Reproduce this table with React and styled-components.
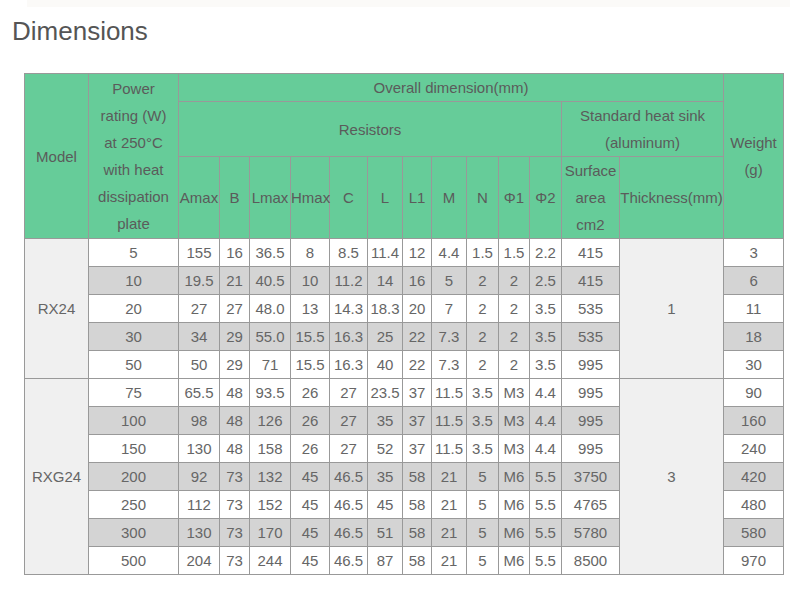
import React from "react";
import styled, { createGlobalStyle } from "styled-components";

const Global = createGlobalStyle`
  html, body { margin: 0; padding: 0; background: #fff; }
  body { font-family: "Liberation Sans", Arial, sans-serif; }
`;

const Page = styled.div`
  width: 800px;
  height: 600px;
  position: relative;
  overflow: hidden;
`;

const TopStrip = styled.div`
  margin-left: 27px;
  width: 763px;
  height: 7px;
  background: #fbfaf8;
`;

const Title = styled.h2`
  margin: 9px 0 0 12px;
  font-size: 26px;
  line-height: 30px;
  font-weight: normal;
  color: #555;
`;

const Table = styled.table`
  margin: 27px 0 0 24px;
  width: 759px;
  border-collapse: collapse;
  table-layout: fixed;
  font-size: 15px;
  color: #666;
`;

const Th = styled.th`
  background: #66cc99;
  border: 1px solid #999;
  font-weight: normal;
  color: #5b5b5b;
  line-height: 27px;
  padding: 0;
  text-align: center;
  vertical-align: middle;
  white-space: ${(p) => (p.$nowrap ? "nowrap" : "normal")};
`;

const Td = styled.td`
  background: ${(p) => (p.$shade ? "#f0f0f0" : p.$gray ? "#d4d4d4" : "#fff")};
  border: 1px solid #999;
  line-height: 27px;
  padding: 0;
  text-align: center;
  vertical-align: middle;
  white-space: nowrap;
`;

const widths = [64, 90, 41, 30, 41, 39, 38, 35, 29, 35, 32, 31, 32, 58, 104, 60];

const groups = [
  {
    model: "RX24",
    thick: "1",
    rows: [
      ["5", "155", "16", "36.5", "8", "8.5", "11.4", "12", "4.4", "1.5", "1.5", "2.2", "415", "3"],
      ["10", "19.5", "21", "40.5", "10", "11.2", "14", "16", "5", "2", "2", "2.5", "415", "6"],
      ["20", "27", "27", "48.0", "13", "14.3", "18.3", "20", "7", "2", "2", "3.5", "535", "11"],
      ["30", "34", "29", "55.0", "15.5", "16.3", "25", "22", "7.3", "2", "2", "3.5", "535", "18"],
      ["50", "50", "29", "71", "15.5", "16.3", "40", "22", "7.3", "2", "2", "3.5", "995", "30"],
    ],
    gray: [false, true, false, true, false],
  },
  {
    model: "RXG24",
    thick: "3",
    rows: [
      ["75", "65.5", "48", "93.5", "26", "27", "23.5", "37", "11.5", "3.5", "M3", "4.4", "995", "90"],
      ["100", "98", "48", "126", "26", "27", "35", "37", "11.5", "3.5", "M3", "4.4", "995", "160"],
      ["150", "130", "48", "158", "26", "27", "52", "37", "11.5", "3.5", "M3", "4.4", "995", "240"],
      ["200", "92", "73", "132", "45", "46.5", "35", "58", "21", "5", "M6", "5.5", "3750", "420"],
      ["250", "112", "73", "152", "45", "46.5", "45", "58", "21", "5", "M6", "5.5", "4765", "480"],
      ["300", "130", "73", "170", "45", "46.5", "51", "58", "21", "5", "M6", "5.5", "5780", "580"],
      ["500", "204", "73", "244", "45", "46.5", "87", "58", "21", "5", "M6", "5.5", "8500", "970"],
    ],
    gray: [false, true, false, true, false, true, false],
  },
];

const subHeads = ["Amax", "B", "Lmax", "Hmax", "C", "L", "L1", "M", "N", "Φ1", "Φ2"];

export default function App() {
  return (
    <Page>
      <Global />
      <TopStrip />
      <Title>Dimensions</Title>
      <Table>
        <colgroup>
          {widths.map((w, i) => (
            <col key={i} style={{ width: w }} />
          ))}
        </colgroup>
        <thead>
          <tr>
            <Th rowSpan={3}>Model</Th>
            <Th rowSpan={3}>
              Power
              <br />
              rating (W)
              <br />
              at 250°C
              <br />
              with heat
              <br />
              dissipation
              <br />
              plate
            </Th>
            <Th colSpan={13}>Overall dimension(mm)</Th>
            <Th rowSpan={3}>
              Weight
              <br />
              (g)
            </Th>
          </tr>
          <tr>
            <Th colSpan={11}>Resistors</Th>
            <Th colSpan={2}>
              Standard heat sink
              <br />
              (aluminum)
            </Th>
          </tr>
          <tr>
            {subHeads.map((h) => (
              <Th key={h} $nowrap>
                {h}
              </Th>
            ))}
            <Th>
              Surface
              <br />
              area
              <br />
              cm2
            </Th>
            <Th $nowrap>Thickness(mm)</Th>
          </tr>
        </thead>
        <tbody>
          {groups.map((g) =>
            g.rows.map((r, i) => (
              <tr key={g.model + i}>
                {i === 0 && (
                  <Td rowSpan={g.rows.length} $shade>
                    {g.model}
                  </Td>
                )}
                {r.slice(0, 13).map((v, j) => (
                  <Td key={j} $gray={g.gray[i]}>
                    {v}
                  </Td>
                ))}
                {i === 0 && (
                  <Td rowSpan={g.rows.length} $shade>
                    {g.thick}
                  </Td>
                )}
                <Td $gray={g.gray[i]}>{r[13]}</Td>
              </tr>
            ))
          )}
        </tbody>
      </Table>
    </Page>
  );
}
